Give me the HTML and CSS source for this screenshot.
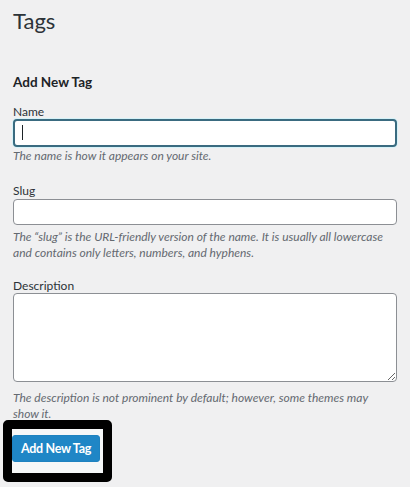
FILE: index.html
```html
<!DOCTYPE html>
<html lang="en">
<head>
    <meta charset="UTF-8">
    <meta name="viewport" content="width=device-width, initial-scale=1.0">
    <title>Tags</title>
    <link rel="stylesheet" href="styles.css">
</head>
<body>
    <h1 class="page-title">Tags</h1>

    <!-- Add new tag form -->
    <div class="form-wrap">
        <h2>Add New Tag</h2>
        <form>
            <div class="form-field field-name">
                <label for="tag-name">Name</label>
                <div class="input-focus">
                    <input type="text" id="tag-name" class="text-input">
                    <span class="caret"></span>
                </div>
                <p class="help">The name is how it appears on your site.</p>
            </div>

            <div class="form-field field-slug">
                <label for="tag-slug">Slug</label>
                <input type="text" id="tag-slug" class="text-input">
                <p class="help">The &ldquo;slug&rdquo; is the URL-friendly version of the name. It is usually all lowercase and contains only letters, numbers, and hyphens.</p>
            </div>

            <div class="form-field field-description">
                <label for="tag-description">Description</label>
                <textarea id="tag-description" rows="5"></textarea>
                <p class="help">The description is not prominent by default; however, some themes may show it.</p>
            </div>

            <div class="submit-mark">
                <button type="button" class="button-primary">Add New Tag</button>
            </div>
        </form>
    </div>
</body>
</html>
```

FILE: styles.css
```css
body {
    margin: 0;
    padding: 0 13px;
    background-color: #f0f0f1;
    font-family: Lato, "Noto Sans", Arial, sans-serif;
    font-size: 12px;
    color: #1d2327;
}
.page-title {
    font-size: 22px;
    font-weight: 400;
    line-height: 28px;
    margin: 7px 0 0;
    color: #2c3338;
}
.form-wrap h2 {
    font-size: 13.5px;
    font-weight: 700;
    line-height: 18px;
    margin: 38px 0 0;
    color: #1d2327;
}
.form-field {
    margin-top: 12px;
}
.field-slug {
    margin-top: 18px;
}
.field-description {
    margin-top: 16px;
}
.form-field label {
    display: block;
    line-height: 16px;
    margin: 0 0 -1px;
    padding-top: 1px;
    color: #2c3338;
}
.text-input {
    display: block;
    box-sizing: border-box;
    width: 100%;
    height: 26px;
    margin: 0;
    border: 1px solid #8c8f94;
    border-radius: 4px;
    background: #fff;
    font: inherit;
}
.field-slug .text-input {
    margin-top: 1px;
}
.input-focus {
    position: relative;
}
.input-focus .text-input {
    height: 28px;
    border: 2px solid #3a6b80;
    box-shadow: 0 0 0 1px #d5f2f8;
    outline: none;
}
.caret {
    position: absolute;
    left: 9px;
    top: 6px;
    width: 1px;
    height: 15px;
    background: #1d2327;
}
textarea {
    display: block;
    box-sizing: border-box;
    width: 100%;
    height: 89px;
    margin: 0;
    border: 1px solid #8c8f94;
    border-radius: 4px;
    background: #fff;
    font: inherit;
    resize: vertical;
}
.help {
    margin: 1px 0 0;
    font-size: 12px;
    font-style: italic;
    line-height: 16px;
    color: #646970;
}
.field-slug .help {
    margin-top: 4px;
}
.field-description .help {
    max-width: 378px;
    margin-top: 8px;
}
.submit-mark {
    display: inline-block;
    margin: -2px 0 0 -10px;
    padding: 6px 3px 11px 0;
    border: 9px solid #000;
    border-radius: 5px;
    background: #f5f7f8;
}
.button-primary {
    display: block;
    height: 27px;
    padding: 0 8px;
    border: 1px solid #1e82c0;
    border-radius: 3px;
    background: #1f86c6;
    color: #fff;
    font: inherit;
    font-size: 12.5px;
    font-weight: 700;
    letter-spacing: -0.3px;
}
```
